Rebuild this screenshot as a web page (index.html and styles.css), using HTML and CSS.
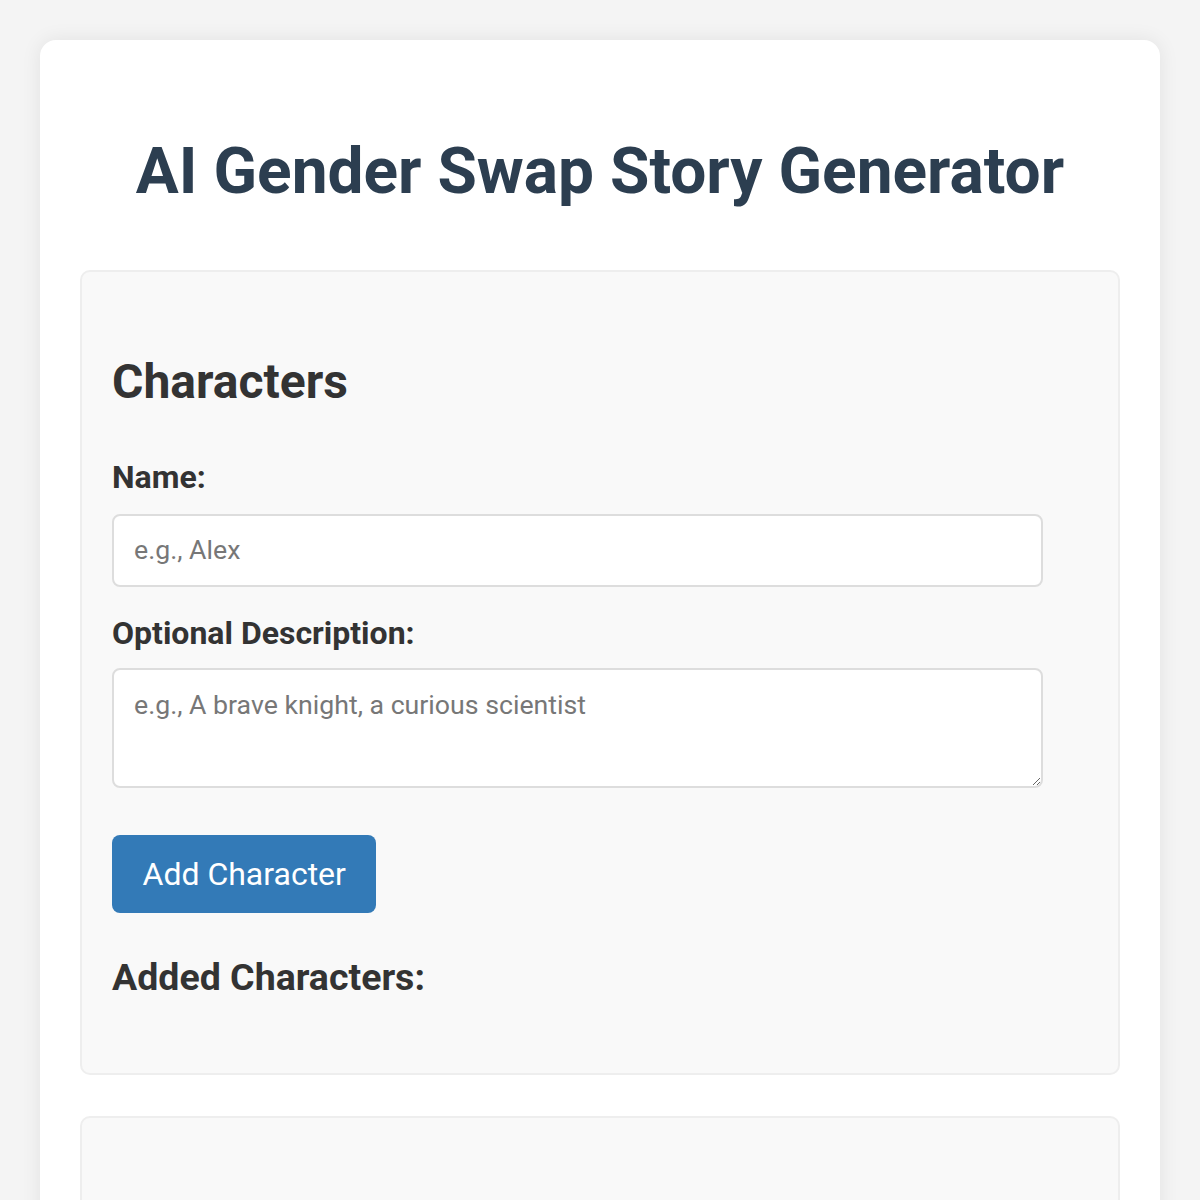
FILE: index.html
```html
<!DOCTYPE html>
<html lang="en">
<head>
    <meta charset="UTF-8">
    <meta name="viewport" content="width=device-width, initial-scale=1.0">
    <title>AI Gender Swap Story Generator</title>

    <link rel="stylesheet" href="styles.css">
</head>
<body>
    <div class="container">
        <h1>AI Gender Swap Story Generator</h1>

        <div class="section">
            <h2>Characters</h2>
            <label for="name">Name:</label>
            <input type="text" id="name" placeholder="e.g., Alex">
            <label for="desc">Optional Description:</label>
            <textarea id="desc" placeholder="e.g., A brave knight, a curious scientist"></textarea>
            <button id="addChar">Add Character</button>
            <h3>Added Characters:</h3>
            <ul id="charList"></ul>
        </div>

        <div class="section">
            <h2>Story</h2>
        </div>
    </div>
</body>
</html>
```

FILE: styles.css
```css
body {
    margin: 0;
    padding: 40px;
    background: #f4f4f4;
    font-family: Roboto, "Liberation Sans", sans-serif;
    color: #333;
}
.container {
    background: #fff;
    border-radius: 16px;
    padding: 94px 40px 40px;
    box-shadow: 0 0 20px rgba(0, 0, 0, 0.08);
}
h1 {
    margin: 0 0 59px;
    font-size: 64px;
    line-height: 1.2;
    text-align: center;
    color: #2c3e50;
}
.section {
    background: #f9f9f9;
    border: 2px solid #eee;
    border-radius: 10px;
    padding: 30px;
    margin-bottom: 41px;
}
h2 {
    margin: 51px 0 48px;
    font-size: 48px;
    line-height: 1.2;
}
label {
    display: block;
    font-size: 32px;
    line-height: 1.2;
    font-weight: bold;
    margin-bottom: 17px;
}
input, textarea {
    display: block;
    box-sizing: border-box;
    width: 931px;
    border: 2px solid #ddd;
    border-radius: 8px;
    background: #fff;
    font-family: inherit;
    font-size: 26.7px;
    padding: 0 20px;
    color: #333;
}
input {
    height: 73px;
    margin-bottom: 27px;
}
textarea {
    height: 120px;
    padding-top: 19px;
    margin-top: -1px;
    margin-bottom: 47px;
}
::placeholder {
    color: #777;
}
button {
    display: block;
    height: 78px;
    padding: 0 30.5px;
    border: none;
    border-radius: 8px;
    background: #337ab7;
    color: #fff;
    font-family: inherit;
    font-size: 32px;
}
h3 {
    margin: 42px 0 0;
    font-size: 37.5px;
    line-height: 1.2;
}
ul {
    margin: 0;
    padding: 0;
    min-height: 43px;
    list-style: none;
}
```
